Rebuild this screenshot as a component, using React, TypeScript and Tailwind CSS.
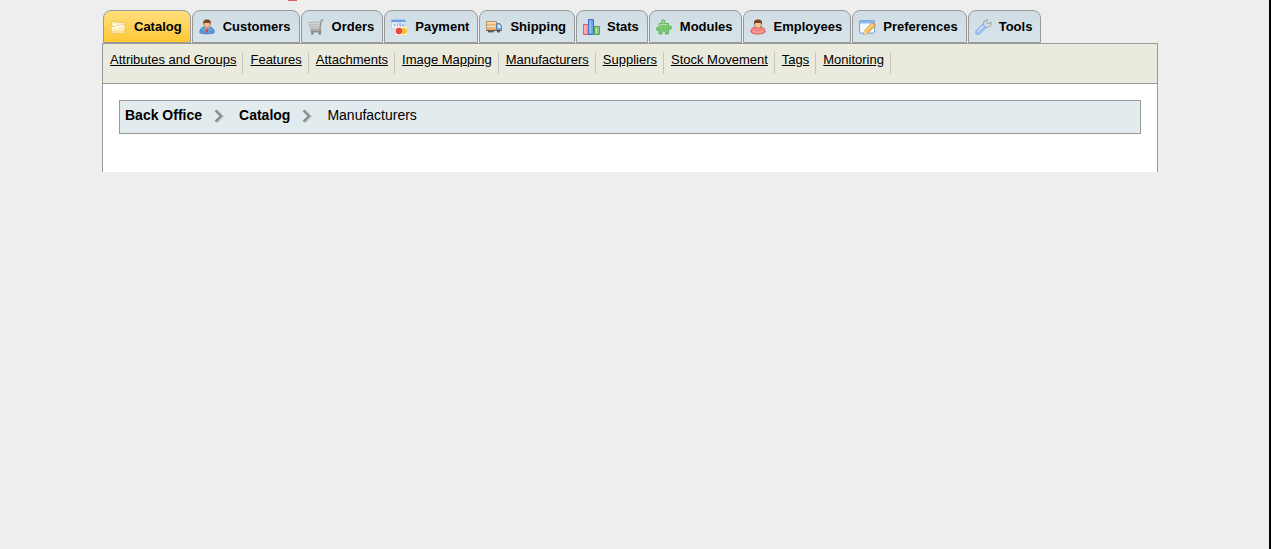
import React from 'react';

const CatalogIcon = () => (
  <svg className="w-4 h-4" viewBox="0 0 16 16" aria-hidden="true">
    <path d="M1.500 2.500h5l1 1h7v10h-13z" fill="#fbe6a4" stroke="#e9c067" strokeWidth=".8" />
    <path d="M3 4.500h10.500v5H3z" fill="#fffdf0" />
    <path d="M.7 7.500h5l1.500-1.500h8.300l-1 8.200h-13z" fill="#fdf0bd" stroke="#e9bf5c" strokeWidth=".8" />
    <path d="M2 8.700h4.500l1.500-1.500h6" stroke="#fffdf2" strokeWidth="1.200" fill="none" />
    <path d="M2 12.500h11.500" stroke="#fbe08e" strokeWidth="1.500" />
  </svg>
);

const CustomersIcon = () => (
  <svg className="w-4 h-4" viewBox="0 0 16 16" aria-hidden="true">
    <path d="M.8 13.500c0-3.500 2-5.300 4.700-5.500h5c2.700.2 4.700 2 4.700 5.500-2 1.800-12.400 1.800-14.400 0z" fill="#62a0df" stroke="#3971b4" strokeWidth=".8" />
    <path d="M5.500 8L8 11l2.500-3z" fill="#f4f8ff" />
    <path d="M7.500 9h1l.7 3.500L8 14l-1.200-1.500z" fill="#d84436" />
    <path d="M4 13.500v-2M12 13.500v-2" stroke="#3971b4" strokeWidth=".7" />
    <ellipse cx="8" cy="5.300" rx="3.300" ry="3.600" fill="#f0bd8e" stroke="#9b6238" strokeWidth=".6" />
    <path d="M4.300 5.200C3.500 1.600 5.500.5 8 .5s4.600 1.100 3.700 4.700L10.500 3.800c-2 .5-3.500.4-5-.2z" fill="#7d4422" />
  </svg>
);

const OrdersIcon = () => (
  <svg className="w-4 h-4" viewBox="0 0 16 16" aria-hidden="true">
    <path d="M.8 3.500l11.700-.5-1 7.500H3.200z" fill="#e3e3e3" stroke="#a3a3a3" strokeWidth=".8" />
    <path d="M3.500 3.500l1 7M5.800 3.500l.5 7M8.200 3.300v7.200M10.500 3.300l-.6 7.200M1.500 5.500h10.500M2.200 7.500h9.500M2.800 9.300h8.800" stroke="#a9a9a9" strokeWidth=".6" />
    <path d="M15.500 1.200h-2.200L12 10.700l1 1.300v1H3.500l-.5-1.200h9" stroke="#909090" strokeWidth="1.200" fill="none" />
    <circle cx="4.300" cy="14.400" r="1.300" fill="#858585" />
    <circle cx="11.800" cy="14.400" r="1.300" fill="#858585" />
  </svg>
);

const PaymentIcon = () => (
  <svg className="w-[17px] h-[17px]" viewBox="0 0 17 17" aria-hidden="true">
    <rect x=".4" y=".4" width="14" height="9" rx=".8" fill="#f1f7ff" stroke="#a8c5e8" strokeWidth=".7" />
    <path d="M.5.8h13.800v2.400H.5z" fill="#6aa0e2" />
    <path d="M2.500 4.500l1.200 2.500 1.200-2.500M6.500 4.500V7M10 4.500H8.300v1.200H10V7H8.200M11.200 7l.9-2.500L13 7" stroke="#6f93cb" strokeWidth=".7" fill="none" />
    <rect x="4" y="7.500" width="12.500" height="9" rx=".8" fill="#fff6e6" stroke="#e3d8c4" strokeWidth=".7" />
    <circle cx="12.800" cy="12" r="3.200" fill="#f7c03a" />
    <circle cx="7.900" cy="12" r="3.200" fill="#ec4346" />
  </svg>
);

const ShippingIcon = () => (
  <svg className="w-4 h-4" viewBox="0 0 16 16" aria-hidden="true">
    <path d="M.5 2.500h10v9H.5z" fill="#edb36b" stroke="#a5825a" strokeWidth=".8" />
    <path d="M1 3h9v1.700H1z" fill="#f9dcae" />
    <path d="M1 6.700h9v1.500H1z" fill="#d8e3ec" />
    <path d="M10.500 4.500h3.300l1.700 2.500v4.500h-5z" fill="#72a5dd" stroke="#5580b2" strokeWidth=".8" />
    <path d="M11.800 5.800h1.700l1 1.800v1.200h-2.700z" fill="#eaf5ff" />
    <path d="M.5 11.500h15" stroke="#66543e" />
    <circle cx="3.500" cy="12.300" r="1.400" fill="#505050" />
    <circle cx="6.500" cy="12.300" r="1.400" fill="#666666" />
    <circle cx="12.500" cy="12.300" r="1.400" fill="#505050" />
  </svg>
);

const StatsIcon = () => (
  <svg className="w-[17px] h-4" viewBox="0 0 17 16" aria-hidden="true">
    <path d="M.5 5.500h5v10h-5z" fill="#fa9696" stroke="#e65a62" />
    <path d="M5.500.5h5v15h-5z" fill="#6ca5ef" stroke="#3c70cc" />
    <path d="M11.500 7.500h5v8h-5z" fill="#8dcc80" stroke="#57a34d" />
    <path d="M2.200 7v7M7.200 2v12M13.200 9v5" stroke="#fff" strokeOpacity=".55" />
  </svg>
);

const ModulesIcon = () => (
  <svg className="w-4 h-4" viewBox="0 0 16 16" aria-hidden="true">
    <path d="M3 4.500h3.200C5.200 2.500 5.800.8 7.300.8s2.200 1.700 1.200 3.700h4v3c2-1 3.100-.2 3.100 1.200s-1.100 2.200-3.100 1.300V15H9.200c.7-2-.1-3-1.500-3s-2.200 1-1.400 3H3v-3.800c-1.600.8-2.600.1-2.600-1.300s1-2.200 2.600-1.400z" fill="#7bc973" stroke="#5aae57" strokeWidth=".8" />
    <path d="M4 5.500h7.500M4 6v2M7.300 1.800v2" stroke="#b5e6aa" strokeWidth=".9" />
  </svg>
);

const EmployeesIcon = () => (
  <svg className="w-4 h-4" viewBox="0 0 16 16" aria-hidden="true">
    <path d="M.8 13c0-3.500 2-4.800 4.700-5h5c2.700.2 4.700 1.500 4.700 5-2 2.800-12.400 2.800-14.400 0z" fill="#f58583" stroke="#d65054" strokeWidth=".8" />
    <path d="M3 12c2 2 8 2 10 0" stroke="#ffb5ab" fill="none" />
    <ellipse cx="8" cy="5.500" rx="3.400" ry="3.800" fill="#f4c799" stroke="#96552f" strokeWidth=".6" />
    <path d="M4.100 5.500C3.400 1.600 5.300.5 8 .5s4.700 1.100 3.900 5L10.500 3.700c-2 .5-3.500.4-5 0z" fill="#7b3e20" />
  </svg>
);

const PreferencesIcon = () => (
  <svg className="w-[17px] h-4" viewBox="0 0 17 16" aria-hidden="true">
    <rect x=".6" y="1.600" width="15" height="12.500" rx=".7" fill="#f5faff" stroke="#6f9fdf" />
    <path d="M1 2h14.300v2.500H1z" fill="#8ab9f0" />
    <path d="M4.500 15.500l1-4L13 4l3.200 3-7.700 7.500z" fill="#f8bf55" stroke="#c48a38" strokeWidth=".7" />
    <path d="M6.500 12L14 5" stroke="#ffe29a" />
    <path d="M13 4l1.300-1L17 5.800 16.200 7z" fill="#ee998b" />
    <path d="M4.500 15.500l1-4 3 3z" fill="#f2d7ab" />
  </svg>
);

const ToolsIcon = () => (
  <svg className="w-[17px] h-4" viewBox="0 0 17 16" aria-hidden="true">
    <path d="M8 6.500L9 2.300 12.700.5l-1.200 3 1.500 1.300 3.300-1.500-.5 3.200-3 2-3-.2z" fill="#d8dadd" stroke="#92979f" strokeWidth=".8" />
    <path d="M7.500 5.500l3.500 3-6.500 6.500c-2.200 1.400-4.900-1-3.500-3.200z" fill="#a0c3f7" stroke="#759be0" strokeWidth=".8" />
    <path d="M2.500 12.500L8.300 7" stroke="#d1e4ff" strokeWidth="1.300" />
  </svg>
);

const Chevron = () => (
  <svg className="w-[10px] h-[14px] mt-px shrink-0" viewBox="0 0 10 14" aria-hidden="true">
    <path d="M2.500 1.500L8 7.500l-5.500 5.500" fill="none" stroke="#bfc5c6" strokeWidth="3" />
    <path d="M1.500 1.500L7 7l-5.500 5.500" fill="none" stroke="#8b8d8d" strokeWidth="2.400" />
  </svg>
);

const tabs = [
  { label: 'Catalog', icon: CatalogIcon, active: true },
  { label: 'Customers', icon: CustomersIcon },
  { label: 'Orders', icon: OrdersIcon },
  { label: 'Payment', icon: PaymentIcon },
  { label: 'Shipping', icon: ShippingIcon },
  { label: 'Stats', icon: StatsIcon },
  { label: 'Modules', icon: ModulesIcon },
  { label: 'Employees', icon: EmployeesIcon },
  { label: 'Preferences', icon: PreferencesIcon },
  { label: 'Tools', icon: ToolsIcon },
];

const subTabs = [
  'Attributes and Groups',
  'Features',
  'Attachments',
  'Image Mapping',
  'Manufacturers',
  'Suppliers',
  'Stock Movement',
  'Tags',
  'Monitoring',
];

export default function App() {
  return (
    <div className="relative min-h-screen bg-[#eeeeee] border-r-2 border-black pr-[9px] text-black font-['Liberation_Sans',Arial,sans-serif]">
      {/* Bottom edge of the notification badge */}
      <div className="absolute top-0 left-[288px] w-[9px] h-px bg-[#dc5b64]" />

      <div className="max-w-[1056px] mx-auto pt-[10px]">
        <nav aria-label="Main">
          <ul className="flex gap-px pl-px">
            {tabs.map(({ label, icon: Icon, active }) => (
              <li key={label}>
                <a
                  href="#"
                  aria-current={active ? 'page' : undefined}
                  className={`flex h-[33px] items-center border border-[#999999] rounded-t-lg pl-[6px] pr-2 text-[13px] leading-4 font-bold whitespace-nowrap ${
                    active
                      ? 'bg-linear-to-b from-[#ffdf7c] to-[#ffc72e]'
                      : 'bg-linear-to-b from-[#d0dde4] to-[#d6e3e9]'
                  }`}
                >
                  <span className="w-6 shrink-0 pt-px"><Icon /></span>
                  {label}
                </a>
              </li>
            ))}
          </ul>
        </nav>

        <div className="border border-b-0 border-[#999999] bg-white">
          <nav aria-label="Catalog" className="h-10 border-b border-[#999999] bg-[#ebeade] pt-2">
            <ul className="flex">
              {subTabs.map((label) => (
                <li key={label} className="h-[22px] border-r border-[#c6c6bd] pl-[7px] pr-[6px] text-[13px] leading-4 whitespace-nowrap">
                  <a href="#" className="underline">{label}</a>
                </li>
              ))}
            </ul>
          </nav>

          <main className="px-4 pt-4 pb-[38px]">
            <nav aria-label="Breadcrumb" className="h-[34px] border border-[#999999] bg-[#e2ebee] px-[5px] pt-[6px]">
              <ol className="flex text-[14px] leading-4">
                <li className="flex items-center gap-3 pr-[15px]">
                  <a href="#" className="font-bold">Back Office</a>
                  <Chevron />
                </li>
                <li className="flex items-center gap-3 pr-[15px]">
                  <a href="#" className="font-bold">Catalog</a>
                  <Chevron />
                </li>
                <li aria-current="page">Manufacturers</li>
              </ol>
            </nav>
          </main>
        </div>
      </div>
    </div>
  );
}
